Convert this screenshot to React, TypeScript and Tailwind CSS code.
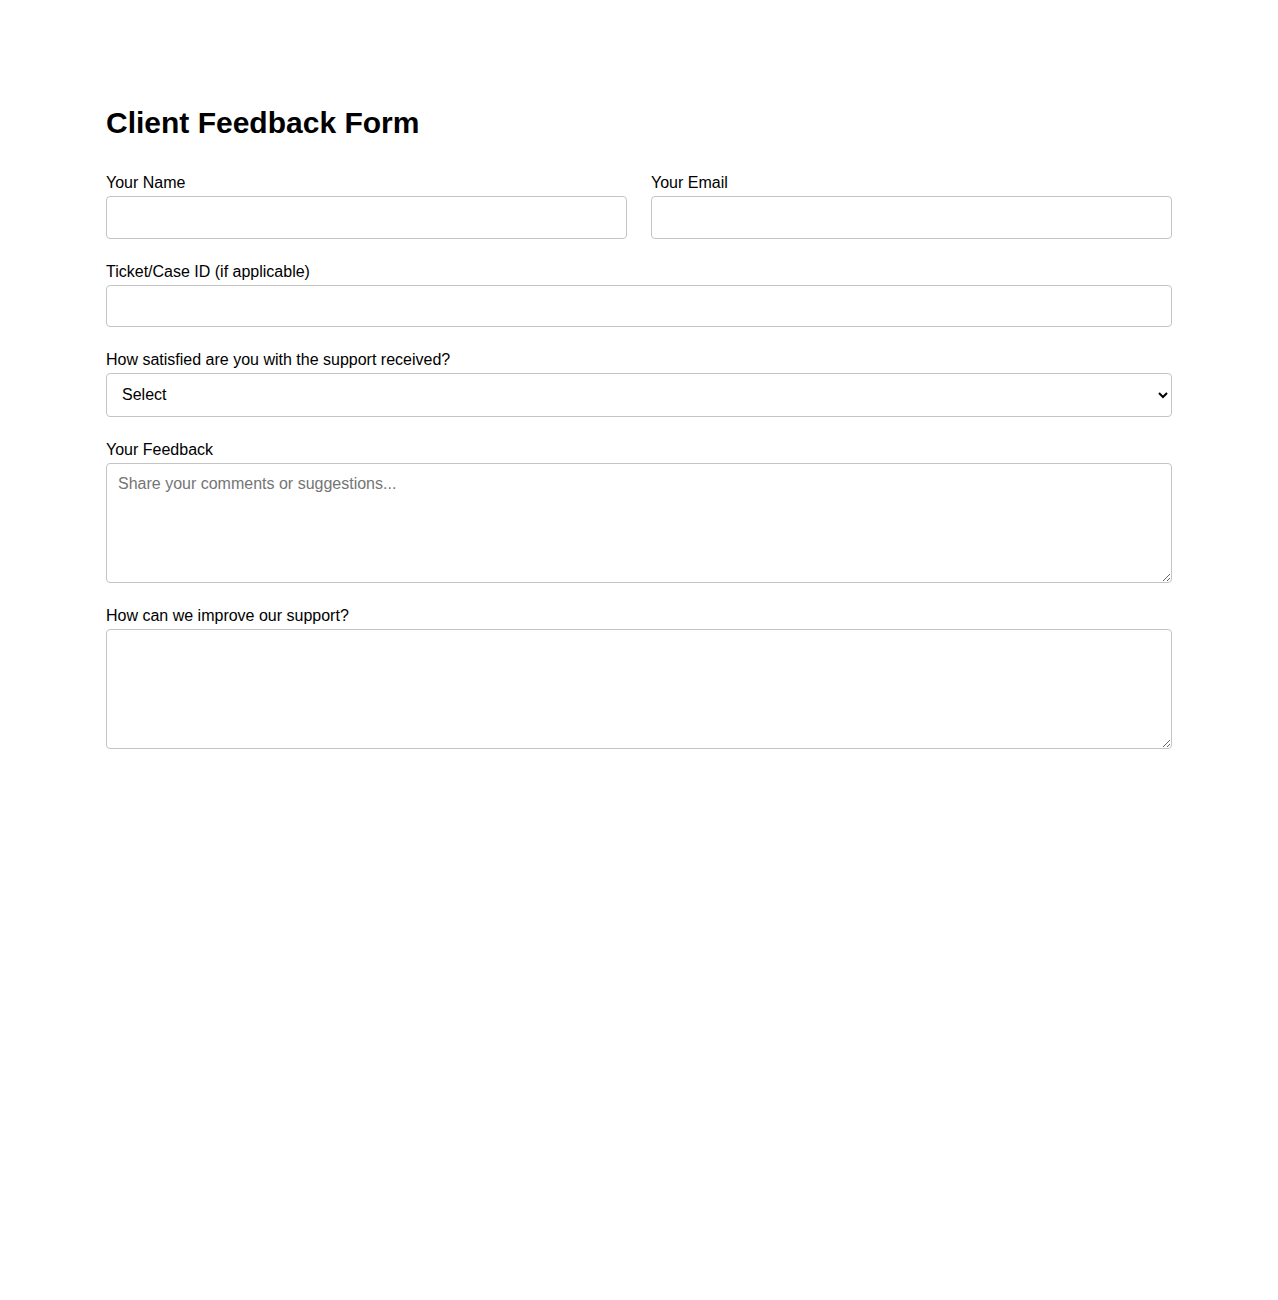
import React from 'react';

const inputCls =
  'block w-full px-3 border border-[#c4c4c4] rounded-[4px] bg-white text-base text-black outline-none';
const areaCls =
  'block w-full h-[120px] pl-[11px] pr-3 py-[8px] border border-[#c4c4c4] rounded-[4px] bg-white text-base text-black outline-none placeholder:text-[#757575]';

const Label: React.FC<{ htmlFor: string; children: React.ReactNode }> = ({ htmlFor, children }) => (
  <label htmlFor={htmlFor} className="block mb-1 text-base leading-[18px] text-black">
    {children}
  </label>
);

export default function App() {
  return (
    <div className="min-h-[1300px] bg-white" style={{ fontFamily: '"Liberation Sans", Arial, sans-serif' }}>
      <div className="w-[1066px] mx-auto pt-[106px]">
        <h1 className="text-[30px] leading-[34px] font-bold text-black mb-[34px]">Client Feedback Form</h1>

        <form className="flex flex-col gap-6">
          {/* Name + email */}
          <div className="grid grid-cols-2 gap-6">
            <div>
              <Label htmlFor="name">Your Name</Label>
              <input id="name" type="text" className={`${inputCls} h-[43px]`} />
            </div>
            <div>
              <Label htmlFor="email">Your Email</Label>
              <input id="email" type="email" className={`${inputCls} h-[43px]`} />
            </div>
          </div>

          <div>
            <Label htmlFor="ticket">Ticket/Case ID (if applicable)</Label>
            <input id="ticket" type="text" className={`${inputCls} h-[42px]`} />
          </div>

          <div>
            <Label htmlFor="satisfaction">How satisfied are you with the support received?</Label>
            <select
              id="satisfaction"
              defaultValue=""
              className="block w-full h-[44px] pl-[11px] pr-2 pb-[2px] border border-[#c4c4c4] rounded-[4px] bg-white text-base text-black outline-none"
            >
              <option value="">Select</option>
              <option value="very-satisfied">Very satisfied</option>
              <option value="satisfied">Satisfied</option>
              <option value="neutral">Neutral</option>
              <option value="dissatisfied">Dissatisfied</option>
              <option value="very-dissatisfied">Very dissatisfied</option>
            </select>
          </div>

          <div>
            <Label htmlFor="feedback">Your Feedback</Label>
            <textarea id="feedback" placeholder="Share your comments or suggestions..." className={areaCls} />
          </div>

          <div>
            <Label htmlFor="improve">How can we improve our support?</Label>
            <textarea id="improve" className={areaCls} />
          </div>
        </form>
      </div>
    </div>
  );
}
